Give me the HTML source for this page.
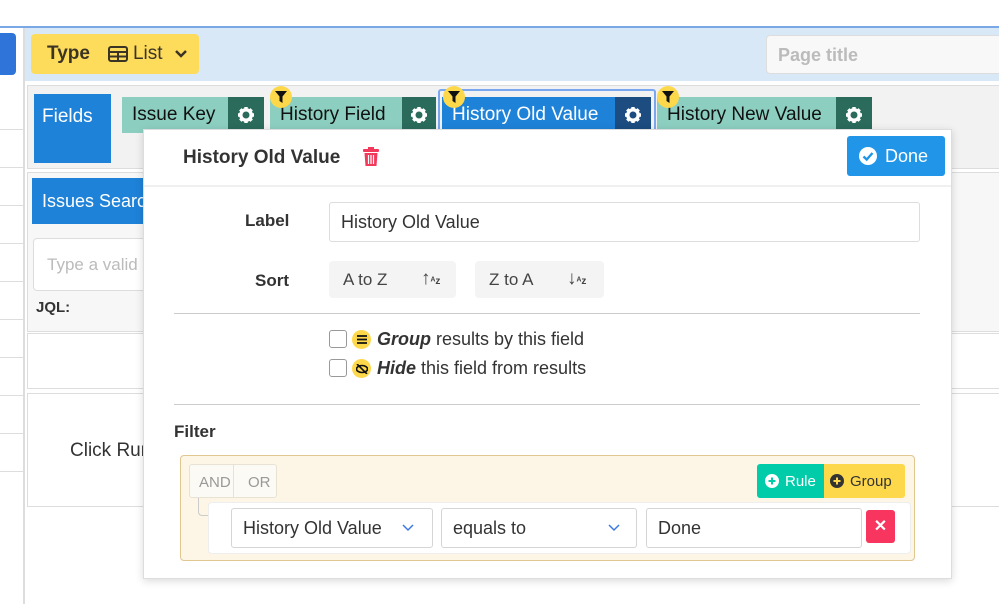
<!DOCTYPE html>
<html><head><meta charset="utf-8"><style>
*{box-sizing:border-box;margin:0;padding:0}
body{width:999px;height:604px;overflow:hidden;background:#fff;font-family:"Liberation Sans",sans-serif;color:#333;position:relative}
.a{position:absolute}
.gear{background:#2a6b5c;display:flex;align-items:center;justify-content:center}
.chip{background:#8ccfc0;color:#111;font-size:19px;display:flex;align-items:center;padding-left:10px;white-space:nowrap}
.fb{width:22px;height:22px;border-radius:50%;background:#fdd84b;display:flex;align-items:center;justify-content:center}
.sel{background:#fff;border:1px solid #d5d5d5;border-radius:3px;font-size:18px;color:#333;display:flex;align-items:center;padding-left:11px}
</style></head><body>
<svg width="0" height="0" style="position:absolute"><defs><g id="g"><circle cx="9" cy="9" r="5.2" fill="none" stroke="#fff" stroke-width="3.4"/><g stroke="#fff" stroke-width="3.4"><path d="M9 1V4M9 14V17M1 9H4M14 9H17M3.3 3.3L5.5 5.5M12.5 12.5L14.7 14.7M3.3 14.7L5.5 12.5M12.5 5.5L14.7 3.3"/></g></g></defs></svg>
<div class="a" style="left:0;top:26px;width:999px;height:2px;background:#7aa8e6"></div>
<div class="a" style="left:0;top:33px;width:16px;height:42px;background:#2f74d8;border-radius:0 4px 4px 0"></div>
<div class="a" style="left:23px;top:28px;width:2px;height:576px;background:#ddd"></div>
<div class="a" style="left:0;top:92px;width:23px;height:400px;background:repeating-linear-gradient(#fff 0,#fff 37px,#ddd 37px,#ddd 38px)"></div>
<div class="a" style="left:25px;top:28px;width:974px;height:53px;background:#d8e8f7"></div>
<div class="a" style="left:31px;top:34px;width:168px;height:40px;background:#fddc5c;border-radius:4px;font-size:19px;color:#3b3424;display:flex;align-items:center;padding-left:16px"><b>Type</b>
<svg style="margin-left:18px" width="20" height="16" viewBox="0 0 20 16"><rect x="1" y="1" width="18" height="14" rx="2" fill="none" stroke="#3b3424" stroke-width="2"/><path d="M1 6H19M1 10.5H19M10 6V15" stroke="#3b3424" stroke-width="2"/></svg>
<span style="margin-left:5px">List</span><svg style="margin-left:12px" width="12" height="8"><path d="M1 1L6 6L11 1" stroke="#3b3424" stroke-width="2.5" fill="none"/></svg></div>
<div class="a" style="left:766px;top:35px;width:240px;height:39px;background:#f8f8f8;border:1px solid #ddd;border-radius:4px;font-size:18px;font-weight:bold;color:#bbb;padding:9px 11px">Page title</div>
<div class="a" style="left:27px;top:85px;width:980px;height:84px;background:#f2f2f2;border:1px solid #ddd"></div>
<div class="a" style="left:34px;top:94px;width:77px;height:69px;background:#1e82d8;color:#fff;font-size:19px;padding:12px 8px">Fields</div>
<div class="a chip" style="left:122px;top:97px;width:142px;height:36px">Issue Key</div>
<div class="a gear" style="left:228px;top:97px;width:36px;height:36px"><svg width="18" height="18"><use href="#g"/></svg></div>
<div class="a chip" style="left:270px;top:97px;width:166px;height:36px">History Field</div>
<div class="a gear" style="left:402px;top:97px;width:34px;height:36px"><svg width="18" height="18"><use href="#g"/></svg></div>
<div class="a" style="left:438px;top:89px;width:218px;height:46px;border:2px solid #7aa8f0;border-radius:3px"></div>
<div class="a chip" style="left:442px;top:97px;width:209px;height:36px;background:#1e82d8;color:#fff">History Old Value</div>
<div class="a gear" style="left:615px;top:97px;width:36px;height:36px;background:#1c4c80"><svg width="18" height="18"><use href="#g"/></svg></div>
<div class="a chip" style="left:657px;top:97px;width:215px;height:36px">History New Value</div>
<div class="a gear" style="left:836px;top:97px;width:36px;height:36px"><svg width="18" height="18"><use href="#g"/></svg></div>
<div class="a fb" style="left:270px;top:86px"><svg width="12" height="12"><path d="M0 0H12L7.5 5.5V12L4.5 10V5.5Z" fill="#111"/></svg></div>
<div class="a fb" style="left:443px;top:86px"><svg width="12" height="12"><path d="M0 0H12L7.5 5.5V12L4.5 10V5.5Z" fill="#111"/></svg></div>
<div class="a fb" style="left:657px;top:86px"><svg width="12" height="12"><path d="M0 0H12L7.5 5.5V12L4.5 10V5.5Z" fill="#111"/></svg></div>
<div class="a" style="left:27px;top:172px;width:980px;height:160px;background:#f7f7f7;border:1px solid #ddd"></div>
<div class="a" style="left:32px;top:178px;width:120px;height:46px;background:#1e82d8;color:#fff;font-size:18px;padding:13px 10px;white-space:nowrap;overflow:hidden">Issues Search</div>
<div class="a" style="left:33px;top:238px;width:120px;height:53px;background:#fff;border:1px solid #ddd;border-radius:4px;color:#bbb;font-size:17px;padding:16px 13px;white-space:nowrap;overflow:hidden">Type a valid</div>
<div class="a" style="left:36px;top:299px;font-weight:bold;font-size:15px">JQL:</div>
<div class="a" style="left:27px;top:333px;width:980px;height:56px;background:#fff;border:1px solid #ddd"></div>
<div class="a" style="left:27px;top:393px;width:980px;height:114px;background:#fff;border:1px solid #ddd"></div>
<div class="a" style="left:70px;top:440px;font-size:19px">Click Run</div>
<div class="a" style="left:143px;top:129px;width:809px;height:450px;background:#fff;border:1px solid #ddd;box-shadow:0 2px 8px rgba(0,0,0,.15)"></div>
<div class="a" style="left:183px;top:147px;font-size:19px;font-weight:bold;color:#333">History Old Value</div>
<svg class="a" style="left:362px;top:147px" width="18" height="20" viewBox="0 0 18 20"><rect x="1" y="2" width="16" height="3" rx="1" fill="#f2395b"/><rect x="6" y="0" width="6" height="3" fill="#f2395b"/><path d="M2.5 6H15.5L14.5 19H3.5Z" fill="#f2395b"/><path d="M6.5 8V17M9 8V17M11.5 8V17" stroke="#fff" stroke-width="1.2"/></svg>
<div class="a" style="left:847px;top:136px;width:98px;height:40px;background:#2196e8;border-radius:3px;color:#fff;font-size:18px;display:flex;align-items:center;padding-left:12px"><svg width="18" height="18"><circle cx="9" cy="9" r="9" fill="#fff"/><path d="M4.5 9.5L7.7 12.5L13.5 6" stroke="#2196e8" stroke-width="2.4" fill="none"/></svg><span style="margin-left:8px">Done</span></div>
<div class="a" style="left:144px;top:185px;width:807px;height:2px;background:#f0f0f0"></div>
<div class="a" style="left:245px;top:211px;font-size:17px;font-weight:bold">Label</div>
<div class="a sel" style="left:329px;top:202px;width:591px;height:40px;border-color:#ddd">History Old Value</div>
<div class="a" style="left:255px;top:271px;font-size:17px;font-weight:bold">Sort</div>
<div class="a" style="left:329px;top:261px;width:127px;height:37px;background:#f4f4f4;border-radius:4px;font-size:17px;color:#444;padding:9px 14px">A to Z<span style="position:absolute;left:92px;top:7px;font-weight:bold;font-size:19px">↑<span style="font-size:10px">ᴬz</span></span></div>
<div class="a" style="left:475px;top:261px;width:129px;height:37px;background:#f4f4f4;border-radius:4px;font-size:17px;color:#444;padding:9px 14px">Z to A<span style="position:absolute;left:92px;top:7px;font-weight:bold;font-size:19px">↓<span style="font-size:10px">ᴬz</span></span></div>
<div class="a" style="left:174px;top:313px;width:746px;height:1px;background:#ccc"></div>
<div class="a" style="left:329px;top:330px;width:18px;height:18px;border:1px solid #999;border-radius:3px"></div>
<div class="a fb" style="left:352px;top:330px;width:19px;height:19px"><svg width="10" height="9"><path d="M0 1H10M0 4.5H10M0 8H10" stroke="#111" stroke-width="1.8"/></svg></div>
<div class="a" style="left:377px;top:329px;font-size:18px;color:#333"><b><i>Group</i></b> results by this field</div>
<div class="a" style="left:329px;top:359px;width:18px;height:18px;border:1px solid #999;border-radius:3px"></div>
<div class="a fb" style="left:352px;top:359px;width:19px;height:19px"><svg width="12" height="10"><ellipse cx="6" cy="5" rx="5.5" ry="3.5" fill="none" stroke="#111" stroke-width="1.6"/><path d="M1 0L11 10" stroke="#111" stroke-width="1.6"/></svg></div>
<div class="a" style="left:377px;top:358px;font-size:18px;color:#333"><b><i>Hide</i></b> this field from results</div>
<div class="a" style="left:174px;top:404px;width:746px;height:1px;background:#ccc"></div>
<div class="a" style="left:174px;top:422px;font-size:17px;font-weight:bold">Filter</div>
<div class="a" style="left:180px;top:455px;width:735px;height:106px;background:#fdf6e7;border:1px solid #dfc78f;border-radius:4px"></div>
<div class="a" style="left:189px;top:464px;width:88px;height:34px;border:1px solid #e8e2d5;border-radius:3px;background:#fcfaf4;font-size:15px;color:#999"><span style="position:absolute;left:9px;top:9px">AND</span><span style="position:absolute;left:43px;top:0;width:1px;height:32px;background:#e8e2d5"></span><span style="position:absolute;left:58px;top:9px">OR</span></div>
<div class="a" style="left:198px;top:498px;width:12px;height:18px;border-left:1px solid #ccc;border-bottom:1px solid #ccc;border-radius:0 0 0 4px"></div>
<div class="a" style="left:757px;top:464px;width:67px;height:34px;background:#00ccaa;border-radius:3px 0 0 3px;color:#fff;font-size:15px;display:flex;align-items:center;padding-left:8px"><svg width="14" height="14"><circle cx="7" cy="7" r="7" fill="#fff"/><path d="M7 3.5V10.5M3.5 7H10.5" stroke="#00ccaa" stroke-width="2"/></svg><span style="margin-left:6px">Rule</span></div>
<div class="a" style="left:824px;top:464px;width:81px;height:34px;background:#fdd84b;border-radius:0 3px 3px 0;color:#333;font-size:15px;display:flex;align-items:center;padding-left:6px"><svg width="14" height="14"><circle cx="7" cy="7" r="7" fill="#333"/><path d="M7 3.5V10.5M3.5 7H10.5" stroke="#fdd84b" stroke-width="2"/></svg><span style="margin-left:6px">Group</span></div>
<div class="a" style="left:208px;top:502px;width:703px;height:52px;background:#fff;border:1px solid #eee;border-radius:4px"></div>
<div class="a sel" style="left:231px;top:508px;width:202px;height:40px">History Old Value<svg style="position:absolute;left:170px" width="12" height="8"><path d="M1 1L6 6L11 1" stroke="#3b7ae0" stroke-width="1.5" fill="none"/></svg></div>
<div class="a sel" style="left:441px;top:508px;width:196px;height:40px">equals to<svg style="position:absolute;left:166px" width="12" height="8"><path d="M1 1L6 6L11 1" stroke="#3b7ae0" stroke-width="1.5" fill="none"/></svg></div>
<div class="a sel" style="left:646px;top:508px;width:216px;height:40px">Done</div>
<div class="a" style="left:866px;top:510px;width:29px;height:33px;background:#f7355e;border-radius:3px;color:#fff;font-weight:bold;font-size:16px;text-align:center;line-height:33px">✕</div>
</body></html>
